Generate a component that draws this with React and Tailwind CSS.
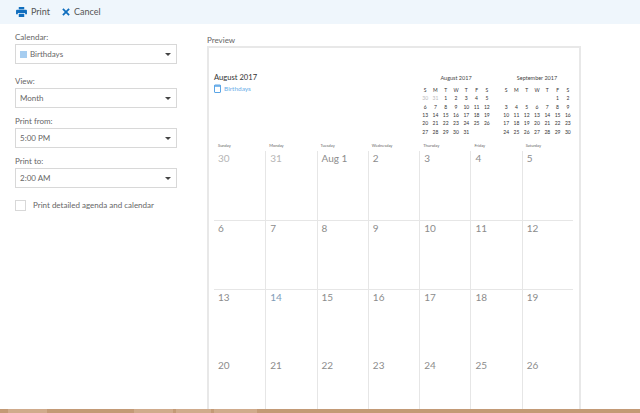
import React from 'react';

const fields = [
  { label: 'View:', value: 'Month', labelClass: 'mt-[11px]' },
  { label: 'Print from:', value: '5:00 PM', labelClass: 'mt-[7px]' },
  { label: 'Print to:', value: '2:00 AM', labelClass: 'mt-[7px]' },
];

const weekdays = ['S', 'M', 'T', 'W', 'T', 'F', 'S'];
const dayNames = ['Sunday', 'Monday', 'Tuesday', 'Wednesday', 'Thursday', 'Friday', 'Saturday'];

const august = [30, 31, 1, 2, 3, 4, 5, 6, 7, 8, 9, 10, 11, 12, 13, 14, 15, 16, 17, 18, 19, 20, 21, 22, 23, 24, 25, 26, 27, 28, 29, 30, 31, '', '', ''];
const september = ['', '', '', '', '', 1, 2, 3, 4, 5, 6, 7, 8, 9, 10, 11, 12, 13, 14, 15, 16, 17, 18, 19, 20, 21, 22, 23, 24, 25, 26, 27, 28, 29, 30, ''];

const weeks = [
  ['30', '31', 'Aug 1', '2', '3', '4', '5'],
  ['6', '7', '8', '9', '10', '11', '12'],
  ['13', '14', '15', '16', '17', '18', '19'],
  ['20', '21', '22', '23', '24', '25', '26'],
];

function Caret() {
  return <span className="w-0 h-0 border-x-[3px] border-x-transparent border-t-[3px] border-t-[#444]" />;
}

function Select({ children }) {
  return (
    <div className="h-[20px] w-[162px] border border-[#d8d8d8] flex items-center justify-between pl-[4px] pr-[5px] text-[8px] text-[#666] bg-white">
      <div className="flex items-center">{children}</div>
      <Caret />
    </div>
  );
}

function MiniMonth({ title, days, className }) {
  return (
    <div className={className}>
      <div className="text-[5.5px] h-[8px] leading-[8px] mt-[3px] text-center text-[#444]">{title}</div>
      <div className="grid grid-cols-7 w-[72px] mt-[4px] text-[5px] leading-[8.33px] text-center text-[#333]">
        {weekdays.map((d, i) => <div key={i}>{d}</div>)}
        {days.map((d, i) => (
          <div key={i} className={i < 2 && d > 20 ? 'text-[#bbb]' : ''}>{d}</div>
        ))}
      </div>
    </div>
  );
}

export default function App() {
  return (
    <div className="w-[640px] h-[413px] overflow-hidden bg-white flex flex-col font-['Lato',sans-serif]">
      <div className="h-[24px] shrink-0 bg-[#eff6fc] flex items-center pl-[16px] text-[9px] text-[#555]">
        <svg width="11" height="10" viewBox="0 0 12 11" fill="#106ebe">
          <path d="M3 0h6v2.500H3zM1 3h10a1 1 0 0 1 1 1v4h-2V6.500H2V8H0V4a1 1 0 0 1 1-1zM3 7.500h6V11H3z" />
        </svg>
        <span className="ml-[4px]">Print</span>
        <svg className="ml-[12px]" width="8" height="8" viewBox="0 0 9 9" stroke="#106ebe" strokeWidth="2" fill="none">
          <path d="M1 1l7 7M8 1L1 8" />
        </svg>
        <span className="ml-[4px]">Cancel</span>
      </div>

      <div className="flex flex-1 min-h-0 overflow-hidden">
        <div className="w-[207px] shrink-0 pl-[15px] pt-[7px] text-[#666]">
          <div className="text-[8px] h-[13px] leading-[13px]">Calendar:</div>
          <Select>
            <span className="w-[7px] h-[7px] bg-[#a6cdf0] mr-[3px]" />
            Birthdays
          </Select>
          {fields.map((f) => (
            <div key={f.label}>
              <div className={`text-[8px] h-[13px] leading-[13px] ${f.labelClass}`}>{f.label}</div>
              <Select>{f.value}</Select>
            </div>
          ))}
          <div className="flex items-center mt-[11px]">
            <span className="w-[11px] h-[11px] border border-[#d8d8d8]" />
            <span className="ml-[7px] text-[8px] text-[#666]">Print detailed agenda and calendar</span>
          </div>
        </div>

        <div className="flex-1 min-w-0 pt-[10px]">
          <div className="text-[8px] h-[12px] leading-[13px] text-[#666]">Preview</div>
          <div className="w-[374px] h-[400px] border-2 border-[#e8e8e8] px-[5px] pt-[23px]">
            <div className="flex h-[71px]">
              <div className="w-[206px] shrink-0">
                <div className="text-[7.6px] h-[12px] leading-[12px] text-[#333]">August 2017</div>
                <div className="flex items-center mt-[1px] text-[6.5px] text-[#6aaee8]">
                  <svg width="7" height="9" viewBox="0 0 7 9" fill="none" stroke="#5aa5e6">
                    <rect x=".5" y="1" width="6" height="7.500" rx=".5" />
                    <path d="M0 2h7" strokeWidth="1.500" />
                  </svg>
                  <span className="ml-[3px]">Birthdays</span>
                </div>
              </div>
              <MiniMonth title="August 2017" days={august} />
              <MiniMonth title="September 2017" days={september} className="ml-[9px]" />
            </div>

            <div className="grid grid-cols-7 w-[359px] h-[9px]">
              {dayNames.map((d) => (
                <div key={d} className="text-[4px] h-[7px] leading-[7px] pl-[4px] text-[#666]">{d}</div>
              ))}
            </div>
            <div className="w-[359px]">
              {weeks.map((week, w) => (
                <div key={w} className={`grid grid-cols-7 ${w === 3 ? 'h-[70px]' : 'h-[69px]'} ${w === 1 || w === 2 ? 'border-t border-[#e6e6e6]' : ''}`}>
                  {week.map((d, i) => (
                    <div key={i} className={`pl-[4px] text-[10px] leading-[14px] ${i > 0 ? 'border-l border-[#e6e6e6]' : ''} ${w === 0 && i < 2 ? 'text-[#b5b5b5]' : d === '14' ? 'text-[#7f9cb8]' : 'text-[#8c8c8c]'}`}>
                      {d}
                    </div>
                  ))}
                </div>
              ))}
            </div>
          </div>
        </div>
      </div>

      <div className="h-[4px] shrink-0 bg-[#c39a76] flex">
        <div className="ml-[8px] w-[39px] bg-[#d0ab8c]" />
        <div className="ml-[87px] w-[39px] bg-[#d0ab8c]" />
        <div className="ml-[3px] w-[35px] bg-[#d0ab8c]" />
        <div className="ml-[3px] w-[43px] bg-[#d0ab8c]" />
      </div>
    </div>
  );
}
